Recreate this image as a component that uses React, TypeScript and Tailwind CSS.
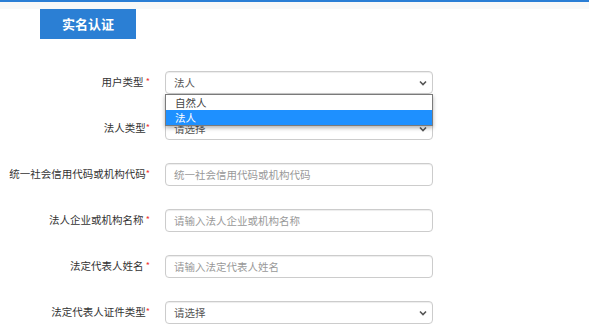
import React from "react";

const font = { fontFamily: '"Noto Sans CJK SC", "Noto Sans", sans-serif' };

function Chevron() {
  return (
    <svg
      className="absolute right-[5px] top-1/2 -translate-y-1/2"
      width="8"
      height="6"
      viewBox="0 0 8 6"
    >
      <path d="M1 1.5 L4 4.5 L7 1.5" fill="none" stroke="#555" strokeWidth="1.6" />
    </svg>
  );
}

function Label({ text, space }: { text: string; space?: boolean }) {
  return (
    <div className="mr-[15px] w-[150px] shrink-0 text-right text-[10.5px] leading-none text-[#333]">
      {text}
      {space ? " " : ""}
      <span className="relative -top-[1px] text-[9px] text-[#e33]">*</span>
    </div>
  );
}

function Field({ children }: { children: React.ReactNode }) {
  return (
    <div className="relative flex h-[23px] w-[268px] items-center rounded-[4px] border border-[#ccc] bg-white px-[8px] text-[10.5px] shadow-[inset_0_1px_1px_rgba(0,0,0,0.075)]">
      {children}
    </div>
  );
}

export default function App() {
  return (
    <div className="h-[332px] w-[589px] overflow-hidden bg-white" style={font}>
      <div className="h-[2px] bg-[#2b7ed5]" />
      <div className="h-[7px] bg-[#f8f8f8]" />
      <div className="pl-[40px]">
        <div className="flex h-[30px] w-[96px] items-center justify-center bg-[#2b7fd4] text-[13px] font-bold text-white">
          实名认证
        </div>
      </div>

      <div className="mt-[32px] flex flex-col gap-[23px]">
        <div className="flex h-[23px] items-center">
          <Label text="用户类型" space />
          <div className="relative">
            <Field>
              <span className="text-[#555]">法人</span>
              <Chevron />
            </Field>
            <div className="absolute left-0 top-[23px] z-10 w-[268px] border border-[#7a7a7a] bg-white text-[10.5px] shadow-[0_2px_4px_rgba(0,0,0,0.3)]">
              <div className="flex h-[15px] items-center px-[9px] text-[#444]">自然人</div>
              <div className="flex h-[15px] items-center bg-[#1e90ff] px-[9px] text-white">法人</div>
            </div>
          </div>
        </div>

        <div className="flex h-[23px] items-center">
          <Label text="法人类型" />
          <Field>
            <span className="text-[#555]">请选择</span>
            <Chevron />
          </Field>
        </div>

        <div className="flex h-[23px] items-center">
          <Label text="统一社会信用代码或机构代码" />
          <Field>
            <span className="text-[#999]">统一社会信用代码或机构代码</span>
          </Field>
        </div>

        <div className="flex h-[23px] items-center">
          <Label text="法人企业或机构名称" space />
          <Field>
            <span className="text-[#999]">请输入法人企业或机构名称</span>
          </Field>
        </div>

        <div className="flex h-[23px] items-center">
          <Label text="法定代表人姓名" space />
          <Field>
            <span className="text-[#999]">请输入法定代表人姓名</span>
          </Field>
        </div>

        <div className="flex h-[23px] items-center">
          <Label text="法定代表人证件类型" />
          <Field>
            <span className="text-[#555]">请选择</span>
            <Chevron />
          </Field>
        </div>
      </div>
    </div>
  );
}
